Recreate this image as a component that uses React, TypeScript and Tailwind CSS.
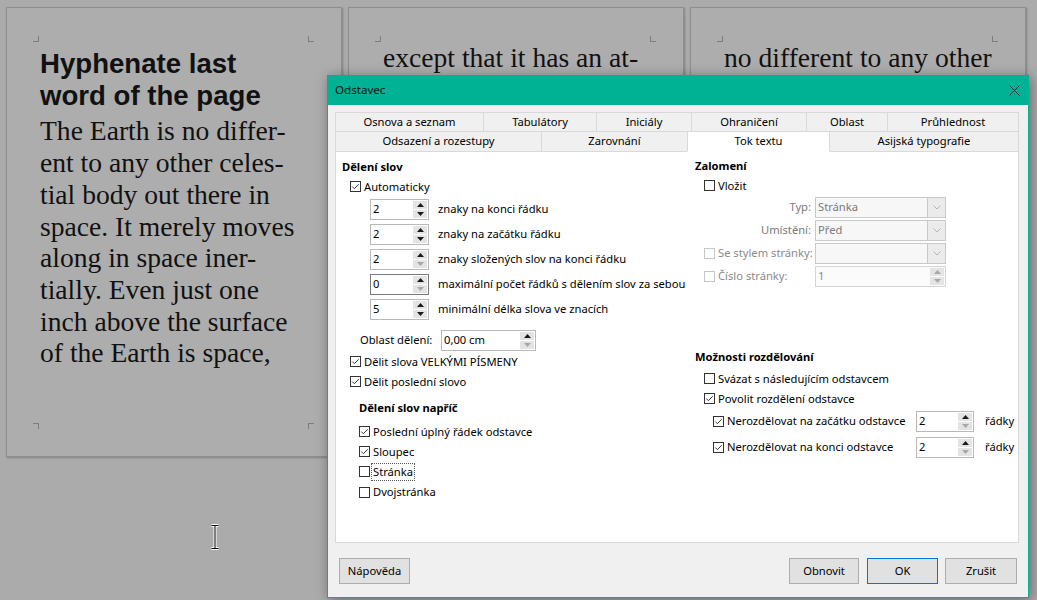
import React from "react";

type CheckProps = { checked?: boolean; disabled?: boolean };

function Check({ checked = false, disabled = false }: CheckProps) {
  const c = disabled ? "#c6c6c6" : "#333333";
  return (
    <svg width="11" height="11" viewBox="0 0 11 11" className="shrink-0">
      <rect x="0.5" y="0.5" width="10" height="10" fill="white" stroke={c} />
      {checked && (
        <path d="M2.3 5.6 L4.4 7.7 L8.7 3.2" fill="none" stroke={c} strokeWidth="1" />
      )}
    </svg>
  );
}

function CheckLabel({
  checked,
  disabled,
  children,
  focus,
}: CheckProps & { children: React.ReactNode; focus?: boolean }) {
  return (
    <div className="flex items-center gap-[3px]">
      <Check checked={checked} disabled={disabled} />
      <span
        className={`${disabled ? "text-[#8a8a8a]" : "text-black"} ${
          focus ? "outline outline-1 outline-dotted outline-[#555] px-[1px] -ml-[1px]" : ""
        }`}
      >
        {children}
      </span>
    </div>
  );
}

function Tri({ up, color }: { up: boolean; color: string }) {
  return (
    <svg width="7" height="4" viewBox="0 0 7 4">
      <path d={up ? "M0 4 L3.5 0 L7 4 Z" : "M0 0 L3.5 4 L7 0 Z"} fill={color} />
    </svg>
  );
}

function Spin({
  value,
  wClass,
  dark,
  downDim,
  disabled,
}: {
  value: string;
  wClass: string;
  dark?: boolean;
  downDim?: boolean;
  disabled?: boolean;
}) {
  const border = dark ? "border-[#7a7a7a]" : disabled ? "border-[#d4d4d4]" : "border-[#b9b9b9]";
  const upC = disabled ? "#a8a8a8" : "#1a1a1a";
  const downC = disabled || downDim ? "#a8a8a8" : "#1a1a1a";
  return (
    <div className={`flex h-[21px] border ${border} ${disabled ? "bg-[#fbfbfb]" : "bg-white"} ${wClass}`}>
      <div className={`flex-1 flex items-center pl-[2px] ${disabled ? "text-[#8a8a8a]" : "text-black"}`}>
        {value}
      </div>
      <div className="flex flex-col w-[15px] py-[1px] pr-[1px] gap-[1px]">
        <div className="flex-1 bg-[#e4e4e4] flex items-center justify-center">
          <Tri up color={upC} />
        </div>
        <div className="flex-1 bg-[#e4e4e4] flex items-center justify-center">
          <Tri up={false} color={downC} />
        </div>
      </div>
    </div>
  );
}

function Combo({ value }: { value: string }) {
  return (
    <div className="flex h-[21px] w-[131px] border border-[#c9c9c9] bg-[#f7f7f7]">
      <div className="flex-1 flex items-center pl-[2px] text-[#7a7a7a]">{value}</div>
      <div className="w-[18px] border-l border-[#c9c9c9] bg-[#ebebeb] flex items-center justify-center">
        <svg width="8" height="5" viewBox="0 0 8 5">
          <path d="M0.5 0.5 L4 4 L7.5 0.5" fill="none" stroke="#b5b5b5" strokeWidth="1" />
        </svg>
      </div>
    </div>
  );
}

function Corner({ pos }: { pos: "tl" | "tr" | "bl" | "br" }) {
  const cls =
    pos === "tl"
      ? "left-[26px] top-[28px] border-r border-b"
      : pos === "tr"
      ? "right-[27px] top-[28px] border-l border-b"
      : pos === "bl"
      ? "left-[26px] bottom-[27px] border-r border-t"
      : "right-[27px] bottom-[27px] border-l border-t";
  return <div className={`absolute w-[6px] h-[6px] border-[#7d7d7d] ${cls}`} />;
}

function Page({ wClass, children }: { wClass: string; children: React.ReactNode }) {
  return (
    <div
      className={`relative h-[450px] shrink-0 bg-[#adadad] border border-[#8e8e8e] shadow-[1px_1px_2px_rgba(0,0,0,0.25)] ${wClass}`}
    >
      <Corner pos="tl" />
      <Corner pos="tr" />
      <Corner pos="bl" />
      <Corner pos="br" />
      {children}
    </div>
  );
}

const serif = "font-['Liberation_Serif',serif] text-[27.6px] leading-[31.7px] text-[#111]";

function Tab({ label, wClass, active }: { label: string; wClass: string; active?: boolean }) {
  return (
    <div
      className={`-ml-px first:ml-0 h-full flex items-center justify-center border border-[#d9d9d9] ${
        active ? "bg-white border-b-white relative z-10" : "bg-[#f0f0f0]"
      } ${wClass}`}
    >
      {label}
    </div>
  );
}

export default function App() {
  return (
    <div className="relative w-[1037px] h-[600px] overflow-hidden bg-[#ababab]">
      {/* document pages */}
      <div className="flex pt-[7px] pl-[6px] gap-[6px]">
        <Page wClass="w-[336px]">
          <div className="pl-[33px] pt-[40px]">
            <div className="font-['Liberation_Sans',sans-serif] font-bold text-[27.6px] leading-[31.7px] text-[#111]">
              <div>Hyphenate last</div>
              <div>word of the page</div>
            </div>
            <div className={`${serif} mt-[4px]`}>
              <div>The Earth is no differ-</div>
              <div>ent to any other celes-</div>
              <div>tial body out there in</div>
              <div>space. It merely moves</div>
              <div>along in space iner-</div>
              <div>tially. Even just one</div>
              <div>inch above the surface</div>
              <div>of the Earth is space,</div>
            </div>
          </div>
        </Page>
        <Page wClass="w-[336px]">
          <div className={`${serif} pl-[34px] pt-[34px]`}>
            <div>except that it has an at-</div>
            <div>mosphere. Anything that</div>
          </div>
        </Page>
        <Page wClass="w-[336px]">
          <div className={`${serif} pl-[33px] pt-[34px]`}>
            <div>no different to any other</div>
            <div>celestial body out there</div>
          </div>
        </Page>
      </div>

      {/* text cursor */}
      <svg className="absolute left-[209px] top-[523px]" width="12" height="28" viewBox="0 0 12 28">
        <path d="M2.5 2.5 H9.5 M6 2.5 V25.5 M2.5 25.5 H9.5" stroke="white" strokeWidth="3" fill="none" />
        <path d="M2.5 2.5 H9.5 M6 2.5 V25.5 M2.5 25.5 H9.5" stroke="black" strokeWidth="1" fill="none" />
      </svg>

      {/* dialog */}
      <div className="absolute left-[327px] top-[75px] w-[702px] h-[523px] border border-[#00b294] bg-[#f0f0f0] shadow-[2px_2px_12px_rgba(0,0,0,0.4)] flex flex-col font-['Noto_Sans',sans-serif] text-[11.2px] text-black">
        <div className="h-[29px] shrink-0 bg-[#00b294] flex items-center justify-between pl-[7px] pr-[8px] text-[#111]">
          <span className="text-[11.6px] -mt-px">Odstavec</span>
          <svg width="11" height="11" viewBox="0 0 11 11">
            <path d="M0.5 0.5 L10.5 10.5 M10.5 0.5 L0.5 10.5" stroke="#1b1b1b" strokeWidth="0.9" />
          </svg>
        </div>

        <div className="ml-[7px] mt-[7px] w-[684px] flex flex-col">
          <div className="flex h-[20px]">
            <Tab label="Osnova a seznam" wClass="w-[149px]" />
            <Tab label="Tabulátory" wClass="w-[114px]" />
            <Tab label="Iniciály" wClass="w-[96px]" />
            <Tab label="Ohraničení" wClass="w-[116px]" />
            <Tab label="Oblast" wClass="w-[82px]" />
            <Tab label="Průhlednost" wClass="flex-1" />
          </div>
          <div className="flex h-[21px] -mt-px">
            <Tab label="Odsazení a rozestupy" wClass="w-[207px]" />
            <Tab label="Zarovnání" wClass="w-[147px]" />
            <Tab label="Tok textu" wClass="w-[143px]" active />
            <Tab label="Asijská typografie" wClass="flex-1" />
          </div>

          <div className="-mt-px h-[392px] bg-white border border-[#d9d9d9] flex">
            {/* left column */}
            <div className="w-[359px] shrink-0 flex flex-col pt-[6px]">
              <div className="h-[19px] flex items-center ml-[6px] font-bold">Dělení slov</div>
              <div className="h-[20px] flex items-center ml-[14px]">
                <CheckLabel checked>Automaticky</CheckLabel>
              </div>
              {[
                ["2", "znaky na konci řádku", false, false],
                ["2", "znaky na začátku řádku", false, false],
                ["2", "znaky složených slov na konci řádku", false, true],
                ["0", "maximální počet řádků s dělením slov za sebou", true, true],
                ["5", "minimální délka slova ve znacích", false, false],
              ].map(([v, l, dark, dim], i) => (
                <div key={i} className="h-[25px] flex items-center ml-[34px]">
                  <Spin value={v as string} wClass="w-[59px]" dark={dark as boolean} downDim={dim as boolean} />
                  <span className="ml-[9px]">{l as string}</span>
                </div>
              ))}
              <div className="h-[26px] mt-[5px] flex items-center ml-[24px]">
                <div className="w-[81px]">Oblast dělení:</div>
                <Spin value="0,00 cm" wClass="w-[95px]" downDim />
              </div>
              <div className="h-[20px] -mt-px flex items-center ml-[14px]">
                <CheckLabel checked>Dělit slova VELKÝMI PÍSMENY</CheckLabel>
              </div>
              <div className="h-[20px] flex items-center ml-[14px]">
                <CheckLabel checked>Dělit poslední slovo</CheckLabel>
              </div>
              <div className="h-[20px] mt-[6px] flex items-center ml-[23px] font-bold">Dělení slov napříč</div>
              <div className="h-[20px] mt-[4px] flex items-center ml-[23px]">
                <CheckLabel checked>Poslední úplný řádek odstavce</CheckLabel>
              </div>
              <div className="h-[20px] flex items-center ml-[23px]">
                <CheckLabel checked>Sloupec</CheckLabel>
              </div>
              <div className="h-[20px] flex items-center ml-[23px]">
                <CheckLabel focus>Stránka</CheckLabel>
              </div>
              <div className="h-[21px] flex items-center ml-[23px]">
                <CheckLabel>Dvojstránka</CheckLabel>
              </div>
            </div>

            {/* right column */}
            <div className="flex-1 flex flex-col pt-[5px]">
              <div className="h-[19px] flex items-center font-bold">Zalomení</div>
              <div className="h-[20px] flex items-center ml-[9px]">
                <CheckLabel>Vložit</CheckLabel>
              </div>
              <div className="h-[23px] flex items-center">
                <div className="w-[120px] pr-[4px] text-right text-[#7a7a7a]">Typ:</div>
                <Combo value="Stránka" />
              </div>
              <div className="h-[23px] flex items-center">
                <div className="w-[120px] pr-[4px] text-right text-[#7a7a7a]">Umístění:</div>
                <Combo value="Před" />
              </div>
              <div className="h-[23px] flex items-center">
                <div className="w-[120px] pl-[9px]">
                  <CheckLabel disabled>Se stylem stránky:</CheckLabel>
                </div>
                <Combo value="" />
              </div>
              <div className="h-[23px] flex items-center">
                <div className="w-[120px] pl-[9px]">
                  <CheckLabel disabled>Číslo stránky:</CheckLabel>
                </div>
                <Spin value="1" wClass="w-[131px]" disabled />
              </div>

              <div className="h-[20px] mt-[59px] flex items-center font-bold">Možnosti rozdělování</div>
              <div className="h-[20px] mt-[2px] flex items-center ml-[9px]">
                <CheckLabel>Svázat s následujícím odstavcem</CheckLabel>
              </div>
              <div className="h-[20px] flex items-center ml-[9px]">
                <CheckLabel checked>Povolit rozdělení odstavce</CheckLabel>
              </div>
              <div className="h-[25px] flex items-center ml-[18px]">
                <div className="w-[203px]">
                  <CheckLabel checked>Nerozdělovat na začátku odstavce</CheckLabel>
                </div>
                <Spin value="2" wClass="w-[58px]" downDim />
                <span className="ml-[11px]">řádky</span>
              </div>
              <div className="h-[25px] mt-[1px] flex items-center ml-[18px]">
                <div className="w-[203px]">
                  <CheckLabel checked>Nerozdělovat na konci odstavce</CheckLabel>
                </div>
                <Spin value="2" wClass="w-[58px]" downDim />
                <span className="ml-[11px]">řádky</span>
              </div>
            </div>
          </div>
        </div>

        {/* buttons */}
        <div className="mt-[15px] px-[11px] flex items-center">
          <button className="h-[26px] w-[71px] bg-[#e1e1e1] border border-[#adadad]">Nápověda</button>
          <div className="flex-1" />
          <button className="h-[26px] w-[70px] bg-[#e1e1e1] border border-[#adadad]">Obnovit</button>
          <button className="h-[26px] w-[71px] ml-[8px] bg-[#e1e1e1] border border-[#0078d7]">OK</button>
          <button className="h-[26px] w-[72px] ml-[7px] bg-[#e1e1e1] border border-[#adadad]">Zrušit</button>
        </div>
      </div>
    </div>
  );
}
